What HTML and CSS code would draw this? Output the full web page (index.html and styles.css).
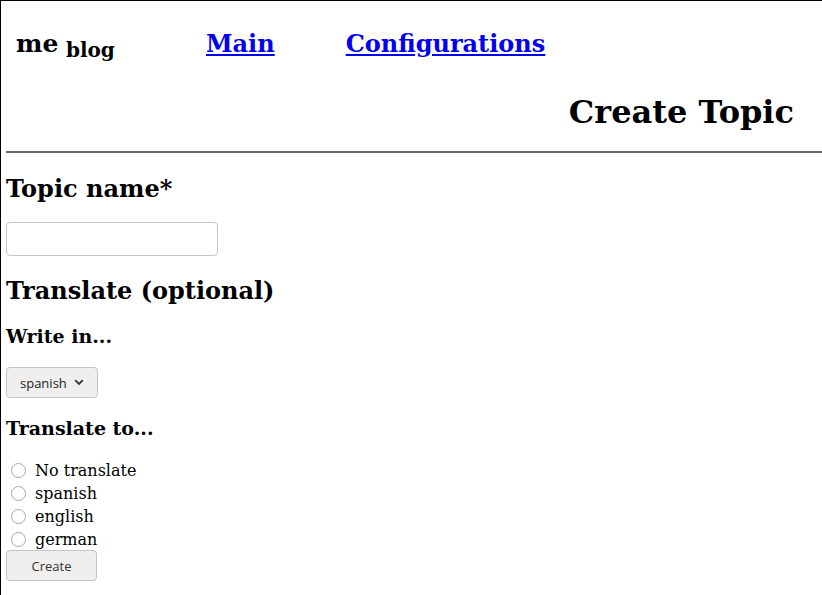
FILE: index.html
```html
<!DOCTYPE html>
<html lang="en">
<head>
<meta charset="utf-8">
<title>Create Topic</title>
<link rel="stylesheet" href="styles.css">
</head>
<body>
<div class="page">
  <header class="masthead">
    <nav class="topbar">
      <div class="brand"><span class="brand-me">me</span> <span class="brand-blog">blog</span></div>
      <a class="navlink navlink-main" href="#">Main</a>
      <a class="navlink" href="#">Configurations</a>
    </nav>
    <h1 class="title">Create Topic</h1>
  </header>
  <hr class="divider">
  <form class="topic-form">
    <h2 class="section-title first">Topic name*</h2>
    <input class="text-input" type="text">
    <h2 class="section-title">Translate (optional)</h2>
    <h3 class="sub-title">Write in...</h3>
    <div class="select-wrap">
      <select class="select">
        <option>spanish</option>
        <option>english</option>
        <option>german</option>
      </select>
      <svg class="chevron" width="10" height="7" viewBox="0 0 10 7"><path d="M1.2 1.2 L5 5 L8.8 1.2" fill="none" stroke="#333" stroke-width="1.8"/></svg>
    </div>
    <h3 class="sub-title sub-title-to">Translate to...</h3>
    <div class="radios">
      <label class="radio-row"><input class="radio" type="radio" name="to"><span>No translate</span></label>
      <label class="radio-row"><input class="radio" type="radio" name="to"><span>spanish</span></label>
      <label class="radio-row"><input class="radio" type="radio" name="to"><span>english</span></label>
      <label class="radio-row"><input class="radio" type="radio" name="to"><span>german</span></label>
    </div>
    <button class="button" type="button">Create</button>
  </form>
</div>
</body>
</html>
```

FILE: styles.css
```css
html, body {
  margin: 0;
  padding: 0;
  background: #fff;
}
body {
  font-family: "DejaVu Serif", serif;
  color: #000;
  overflow: hidden;
}
.page {
  border-top: 1px solid #000;
  border-left: 1px solid #000;
  padding-left: 5px;
  min-height: 600px;
}
.topbar {
  display: flex;
  align-items: baseline;
  padding: 29px 0 0 10px;
  height: 28px;
}
.brand {
  font-weight: bold;
  width: 190px;
  line-height: 28px;
}
.brand-me {
  font-size: 25px;
}
.brand-blog {
  font-size: 20px;
  vertical-align: -5px;
  margin-left: 2px;
}
.navlink {
  font-size: 24px;
  line-height: 28px;
  font-weight: bold;
  color: #0000ee;
  text-decoration: underline;
}
.navlink-main {
  margin-right: 71px;
}
.title {
  margin: 36px 0 0 0;
  font-size: 32px;
  line-height: 37px;
  font-weight: bold;
  text-align: right;
  padding-right: 28px;
}
.divider {
  margin: 20px 0 0 0;
  border: none;
  height: 2px;
  background: #666;
}
.topic-form {
  display: flex;
  flex-direction: column;
  align-items: flex-start;
}
.section-title {
  margin: 21px 0 0 0;
  font-size: 24px;
  line-height: 28px;
  font-weight: bold;
}
.section-title.first {
  margin-top: 22px;
}
.text-input {
  margin-top: 19px;
  box-sizing: border-box;
  width: 212px;
  height: 34px;
  border: 1px solid #c8c4c0;
  border-radius: 4px;
  background: #fff;
  padding: 0 6px;
}
.sub-title {
  margin: 20px 0 0 0;
  font-size: 19px;
  line-height: 22px;
  font-weight: bold;
}
.sub-title-to {
  margin-top: 19px;
}
.select-wrap {
  position: relative;
  margin-top: 20px;
}
.select {
  -webkit-appearance: none;
  appearance: none;
  box-sizing: border-box;
  width: 92px;
  height: 31px;
  border: 1px solid #c8c4c0;
  border-radius: 4px;
  background: #f0efee;
  font-family: "Open Sans", sans-serif;
  font-size: 13px;
  color: #222;
  padding: 0 0 0 13px;
  margin: 0;
}
.chevron {
  position: absolute;
  left: 68px;
  top: 12px;
  pointer-events: none;
}
.radios {
  margin-top: 20px;
  display: flex;
  flex-direction: column;
}
.radio-row {
  display: flex;
  align-items: center;
  height: 23px;
  font-size: 16px;
}
.radio {
  -webkit-appearance: none;
  appearance: none;
  box-sizing: border-box;
  width: 15px;
  height: 15px;
  border: 1px solid #aaa6a2;
  border-radius: 50%;
  background: #fff;
  margin: 0 9px 0 5px;
}
.button {
  margin-top: -1px;
  box-sizing: border-box;
  width: 91px;
  height: 31px;
  border: 1px solid #c8c4c0;
  border-radius: 4px;
  background: #f0efee;
  font-family: "Open Sans", sans-serif;
  font-size: 13px;
  color: #333;
  padding: 0;
}
```
